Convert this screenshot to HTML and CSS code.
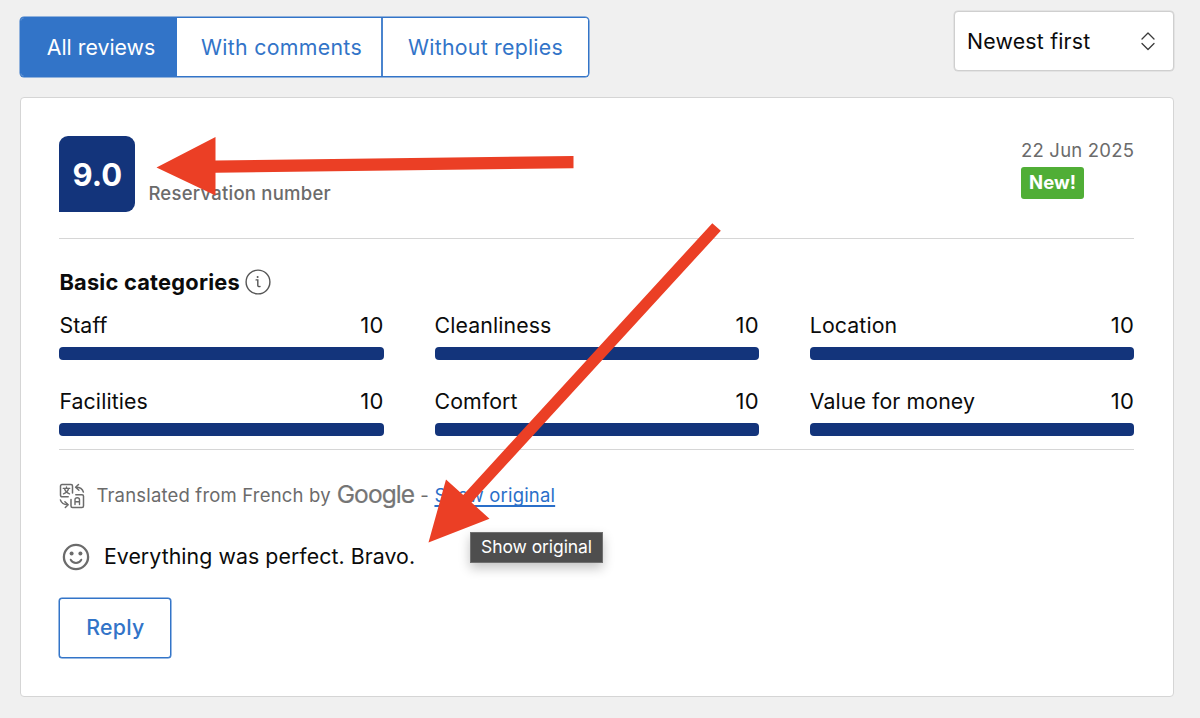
FILE: index.html
```html
<!DOCTYPE html>
<html lang="en">
<head>
<meta charset="utf-8">
<title>Guest reviews</title>
<link rel="stylesheet" href="styles.css">
</head>
<body>
<main class="page">
  <div class="toolbar">
    <nav class="tabs">
      <button class="tab tab-active">All reviews</button>
      <button class="tab tab-comments">With comments</button>
      <button class="tab tab-replies">Without replies</button>
    </nav>
    <button class="sort"><span>Newest first</span>
      <svg width="16" height="20" viewBox="0 0 16 20" fill="none" stroke="#3a3a3a" stroke-width="1.3" stroke-linecap="round" stroke-linejoin="round"><path d="M2 8 8 2l6 6M2 12.500l6 6 6-6"/></svg>
    </button>
  </div>
  <article class="card">
    <header class="head">
      <div class="score"><span>9.0</span></div>
      <div class="reservation">Reservation number</div>
      <div class="meta">
        <div class="date">22 Jun 2025</div>
        <span class="badge">New!</span>
      </div>
    </header>
    <section class="categories">
      <h2 class="title"><span>Basic categories</span>
        <svg width="26" height="26" viewBox="0 0 26 26" fill="none" stroke="#555" stroke-width="1.4"><circle cx="13" cy="13" r="11.9"/><path d="M11.1 10.9h1.7v5.5c0 1 .9 1.5 2.2 1.1" stroke-linecap="round"/><circle cx="12.6" cy="7.9" r="1" fill="#555" stroke="none"/></svg>
      </h2>
      <div class="grid">
        <div class="cat"><div class="row"><span>Staff</span><span class="num">10</span></div><div class="bar"></div></div>
        <div class="cat"><div class="row"><span>Cleanliness</span><span class="num">10</span></div><div class="bar"></div></div>
        <div class="cat"><div class="row"><span>Location</span><span class="num">10</span></div><div class="bar"></div></div>
        <div class="cat"><div class="row"><span>Facilities</span><span class="num">10</span></div><div class="bar"></div></div>
        <div class="cat"><div class="row"><span>Comfort</span><span class="num">10</span></div><div class="bar"></div></div>
        <div class="cat"><div class="row"><span>Value for money</span><span class="num">10</span></div><div class="bar"></div></div>
      </div>
    </section>
    <div class="translated">
      <svg class="translate-icon" width="26" height="26" viewBox="0 0 26 26" fill="none" stroke="#6b6b6b" stroke-width="1.5" stroke-linecap="round" stroke-linejoin="round"><path d="M9.2 13.8H3a1.5 1.5 0 0 1-1.500-1.500V3A1.500 1.500 0 0 1 3 1.500h9A1.500 1.500 0 0 1 13.500 3v7"/><path d="M4.200 5.300h6.600M7.500 3.800v1.500M9.600 5.500C9 8 7 9.900 4.500 10.900M5.500 5.500c.6 2.400 2.500 4.400 5 5.400" stroke-width="1.300"/><path d="M16.800 11.700H23a1.500 1.500 0 0 1 1.500 1.500V23a1.500 1.500 0 0 1-1.500 1.500h-9.500A1.500 1.500 0 0 1 12 23v-6.500"/><path d="M16 21.500v-4.800c0-1.200.8-2 2.200-2s2.300.8 2.300 2v4.800M16 18.700h4.500" stroke-width="1.400"/><path d="M19.500 1.500 16.600 4.300l3.300 3M16.900 4.300c4 0 6.600 1.500 7.500 4.800M6.300 24.500l2.900-2.800-3.300-3M8.900 21.700c-4 0-6.600-1.500-7.500-4.800"/></svg>
      <span class="source">Translated from French by</span>
      <span class="google">Google</span>
      <span class="dash">-</span>
      <a class="link">Show original</a>
    </div>
    <div class="comment">
      <svg width="28" height="28" viewBox="0 0 28 28" fill="none" stroke="#6b6b6b" stroke-width="2.300" stroke-linecap="round"><circle cx="14" cy="14" r="12.100"/><path d="M8.700 16.700c2.300 4.300 8.300 4.300 10.600 0" stroke-width="1.900"/><circle cx="9.600" cy="10.500" r="2" fill="#6b6b6b" stroke="none"/><circle cx="18.400" cy="10.500" r="2" fill="#6b6b6b" stroke="none"/></svg>
      <span>Everything was perfect. Bravo.</span>
    </div>
    <button class="reply">Reply</button>
  </article>
  <div class="tooltip">Show original</div>
  <svg class="arrows" width="1200" height="718" viewBox="0 0 1200 718" fill="#eb3f25"><path d="M156.500 167.500 215.500 137v23.500L573.500 156v12.300L215.500 172.700V195.500z"/><path d="M428.500 542.500 446 479.500l17.200 15.400L712.300 223.200l8.500 7.500L471.500 502.500l18 16.200z"/></svg>
</main>
</body>
</html>
```
FILE: styles.css
```css
* { box-sizing: border-box; }
body {
  margin: 0;
  background: #f0f0f0;
  color: #0b0b0b;
  font-family: Inter, "Liberation Sans", sans-serif;
  font-size: 21.3px;
  letter-spacing: 0.100px;
}
button { font: inherit; letter-spacing: inherit; margin: 0; padding: 0; white-space: nowrap; }
span, a { white-space: nowrap; }
svg { flex: none; }
.page { position: relative; width: 1200px; height: 718px; overflow: hidden; padding: 11px 26px 0 20px; }
.toolbar { display: flex; justify-content: space-between; height: 86px; align-items: flex-start; }
.tabs {
  display: flex;
  width: 569px;
  height: 60px;
  margin-top: 6.400px;
  border: 1px solid #3274c8;
  border-radius: 4px;
  background: #fff;
  box-shadow: 0 0 0 0.500px #3274c8;
  overflow: hidden;
}
.tab { border: 0; background: #fff; color: #3274c8; flex: 1; padding-bottom: 1px; }
.tab-active { flex: none; width: 156px; padding-left: 4px; background: #3274c8; color: #fff; letter-spacing: 0; }
.tab-comments { flex: none; width: 206px; padding-left: 5px; border-right: 2px solid #4a84ce; letter-spacing: 0.300px; }
.tab-replies { letter-spacing: 0.250px; }
.sort {
  display: flex;
  align-items: center;
  justify-content: space-between;
  width: 220px;
  height: 60px;
  padding: 0 17px 1px 12px;
  background: #fff;
  border: 1px solid #cfcfcf;
  border-radius: 4px;
  box-shadow: 0 0 0 0.500px #d5d5d5;
  color: #0b0b0b;
  letter-spacing: 0.200px;
}
.card { height: 600px; padding: 38px 39px 0 38.400px; background: #fff; border: 1px solid #d5d5d5; border-radius: 4px; }
.head { display: flex; height: 103px; border-bottom: 1px solid #d6d6d6; }
.score {
  display: flex;
  align-items: center;
  justify-content: center;
  width: 76px;
  height: 76px;
  background: #13347b;
  border-radius: 9px 9px 9px 0;
  color: #fff;
  font-size: 31px;
  font-weight: 700;
}
.reservation { margin: 45px 0 0 13px; color: #6b6b6b; font-size: 18.500px; line-height: 24px; font-weight: 500; letter-spacing: 0.240px; white-space: nowrap; }
.meta { width: 113px; margin-left: auto; color: #6b6b6b; font-size: 18.500px; letter-spacing: 0.200px; }
.date { line-height: 26px; margin: 1px 0 4px; white-space: nowrap; }
.badge {
  display: inline-block;
  width: 63px;
  line-height: 31px;
  height: 32px;
  border-radius: 3px;
  background: #50ae36;
  color: #fff;
  font-weight: 700;
  text-align: center;
  letter-spacing: 0;
}
.categories { height: 211px; padding-top: 29px; border-bottom: 1px solid #d6d6d6; }
.title { display: flex; align-items: center; gap: 5.500px; height: 28px; margin: 0 0 15px; font-size: 21.800px; font-weight: 700; letter-spacing: 0.230px; }
.grid { display: grid; grid-template-columns: repeat(3, 1fr); column-gap: 51px; row-gap: 13px; }
.row { display: flex; justify-content: space-between; line-height: 28px; height: 36px; }
.num { font-size: 22px; letter-spacing: 0.200px; }
.bar { height: 13px; border-radius: 4px; background: #13347b; }
.cat { height: 63px; }
.translated { display: flex; align-items: center; height: 30px; margin-top: 31px; color: #6b6b6b; font-size: 18.500px; letter-spacing: 0.180px; }
.source { margin: -2px 0 0 11px; }
.google { margin: -5px 0 0 6px; color: #757575; font-size: 24.500px; letter-spacing: -0.900px; -webkit-text-stroke: 0.200px #757575; }
.dash { margin: -2px 0 0 6px; }
.link { margin: -2px 0 0 5.500px; color: #2a6fc9; text-decoration: underline; text-decoration-thickness: 1.500px; text-underline-offset: 3px; text-decoration-skip-ink: none; }
.comment { display: flex; align-items: center; gap: 14px; height: 32px; margin: 29.600px 0 25.400px; padding-left: 2.500px; }
.comment span { margin-top: -1px; letter-spacing: 0.070px; }
.reply {
  width: 112px;
  height: 60px;
  padding-bottom: 1px;
  background: #fff;
  border: 1px solid #3274c8;
  border-radius: 3px;
  box-shadow: 0 0 0 0.500px #3274c8;
  color: #3274c8;
  font-weight: 500;
  letter-spacing: 0.250px;
}
.tooltip {
  position: absolute;
  left: 470px;
  top: 532px;
  width: 133px;
  height: 31px;
  line-height: 28px;
  border: 1px solid #707070;
  background: #4e4e4e;
  color: #fff;
  font-size: 17.500px;
  letter-spacing: -0.080px;
  text-align: center;
  box-shadow: 0 5px 12px rgba(0, 0, 0, .24);
}
.arrows { position: absolute; left: 0; top: 0; }
```
